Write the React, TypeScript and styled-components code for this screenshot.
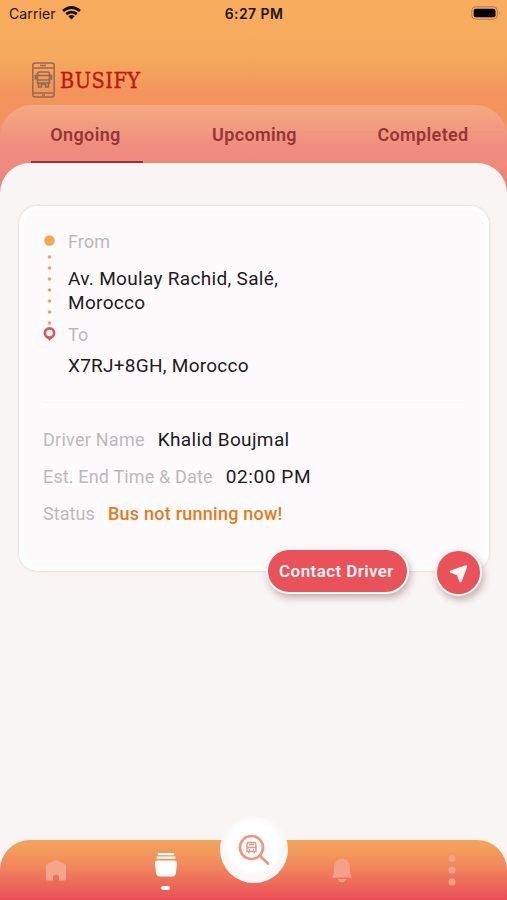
import React from "react";
import styled, { createGlobalStyle } from "styled-components";

const Global = createGlobalStyle`
  * { box-sizing: border-box; }
  body { margin: 0; background: #f9f5f4; font-family: Roboto, "Liberation Sans", sans-serif; }
  svg { display: block; flex: none; }
`;

const Screen = styled.div`
  position: relative;
  display: flex;
  flex-direction: column;
  width: 507px;
  height: 900px;
  overflow: hidden;
  background: #f9f5f4;
`;

const Header = styled.header`
  height: 192px;
  flex: none;
  background: linear-gradient(#f7ac5e 0, #f6aa5d 58px, #f2945b 92px, #f0935a 192px);
`;

const StatusBar = styled.div`
  display: grid;
  grid-template-columns: 1fr 1fr 1fr;
  align-items: center;
  height: 28px;
  padding: 0 6px 2px 9px;
  font-family: Inter, sans-serif;
  font-size: 14px;
  color: #1b130b;
`;

const Carrier = styled.div`
  display: flex;
  align-items: center;
  gap: 6px;
  letter-spacing: 0.1px;
`;

const Clock = styled.div`
  padding-right: 2px;
  text-align: center;
  font-weight: 600;
  letter-spacing: 0.4px;
`;

const Battery = styled.div`
  justify-self: end;
`;

const Brand = styled.div`
  display: flex;
  align-items: center;
  gap: 5px;
  height: 77px;
  padding: 27px 0 0 32px;
  font-family: "DejaVu Serif Condensed", "DejaVu Serif", serif;
  font-stretch: condensed;
  font-size: 21.5px;
  line-height: 50px;
  letter-spacing: 0.5px;
  color: #bd1710;
  -webkit-text-stroke: 0.35px #bd1710;
`;

const BrandName = styled.span`
  padding-top: 2px;
`;

const TabBar = styled.nav`
  display: flex;
  justify-content: space-between;
  height: 87px;
  padding: 0 28px 0 31px;
  border-radius: 32px 32px 0 0;
  background: linear-gradient(#f5aa80 0, #f08e7e 40px, #ef8b7d 58px, #ee7b78 100%);
`;

const Tab = styled.div<{ $active?: boolean; $spacing: number; $shift?: number }>`
  width: 112px;
  height: 58px;
  padding-right: ${(p) => p.$shift ?? 0}px;
  border-bottom: 2px solid ${(p) => (p.$active ? "#96303a" : "transparent")};
  text-align: center;
  font-size: 18px;
  font-weight: 600;
  line-height: 59px;
  letter-spacing: ${(p) => p.$spacing}px;
  white-space: nowrap;
  color: #963536;
`;

const Content = styled.main`
  position: relative;
  flex: 1;
  margin-top: -29px;
  padding: 43px 18px 0 19px;
  border-radius: 30px 30px 0 0;
  background: #f9f5f4;
`;

const Card = styled.section`
  position: relative;
  height: 365px;
  padding: 24px 25px 0 24px;
  border-radius: 19px;
  background: #fcfafb;
  box-shadow: inset 0 0 5px 4px #ffffff, 0 0 2px 1px rgba(85, 65, 65, 0.1);
`;

const Route = styled.div`
  display: grid;
  grid-template-columns: 14px 1fr;
  column-gap: 11px;
  height: 173px;
  border-bottom: 1px solid #f7f5f6;
`;

const Label = styled.div<{ $spacing?: number }>`
  font-size: 18px;
  line-height: 24px;
  letter-spacing: ${(p) => p.$spacing ?? 0.1}px;
  white-space: nowrap;
  color: #bcb9ba;
`;

const Address = styled.div<{ $top: number; $bottom?: number; $spacing: number }>`
  padding: ${(p) => p.$top}px 0 ${(p) => p.$bottom ?? 0}px;
  width: 245px;
  font-size: 19px;
  line-height: 24px;
  letter-spacing: ${(p) => p.$spacing}px;
  color: #211b1e;
`;

const Details = styled.div`
  display: flex;
  flex-direction: column;
  gap: 13px;
  padding-top: 25px;
`;

const Detail = styled.div`
  display: flex;
  align-items: baseline;
  gap: 13px;
  height: 24px;
`;

const Value = styled.div<{ $warning?: boolean; $spacing: number }>`
  font-size: ${(p) => (p.$warning ? 18 : 19)}px;
  font-weight: ${(p) => (p.$warning ? 500 : 400)};
  line-height: 24px;
  letter-spacing: ${(p) => p.$spacing}px;
  white-space: nowrap;
  color: ${(p) => (p.$warning ? "#e57b1b" : "#211b1e")};
`;

const Actions = styled.div`
  position: absolute;
  right: 7px;
  bottom: -25px;
  display: flex;
  align-items: center;
  gap: 26px;
`;

const ActionButton = styled.button<{ $round?: boolean }>`
  display: flex;
  align-items: center;
  justify-content: center;
  width: ${(p) => (p.$round ? 47 : 143)}px;
  height: ${(p) => (p.$round ? 47 : 46)}px;
  margin-top: ${(p) => (p.$round ? 4 : 0)}px;
  padding: 0 2px 0 0;
  border: 2px solid #fff6f5;
  border-radius: 24px;
  background: #e95258;
  box-shadow: 2px 4px 7px rgba(65, 30, 30, 0.3);
  font: 600 17px Roboto, sans-serif;
  letter-spacing: 0.4px;
  color: #fff5f5;
`;

const BottomNav = styled.nav`
  position: relative;
  display: grid;
  grid-template-columns: 110px 110px 66px 110px 110px;
  justify-content: center;
  flex: none;
  height: 60px;
  border-radius: 30px 30px 0 0;
  background: linear-gradient(#f5a65a 0, #f0875c 27px, #e95058 59px);
`;

const NavItem = styled.div`
  display: flex;
  flex-direction: column;
  align-items: center;
`;

const ActiveMark = styled.div`
  width: 9px;
  height: 4px;
  margin-top: 8px;
  border-radius: 2px;
  background: #fff;
`;

const SearchButton = styled.div`
  position: absolute;
  left: 220px;
  top: -24px;
  display: grid;
  place-items: center;
  width: 68px;
  height: 67px;
  border-radius: 50%;
  background: radial-gradient(circle at 50% 45%, #ffffff 24px, #faf7f8 30px);
`;

const BusBadge = () => (
  <g fill="none" stroke="currentColor" strokeWidth="1.7">
    <path d="M3 3Q3 1 5 1h8q2 0 2 2v9H3zM3 4.5H1V8h2m12-3.5h2V8h-2M3 4.5h12M3 9h12M4 12v4h3v-3h4v3h3v-4" />
  </g>
);

const SearchBus = () => (
  <g fill="none" stroke="currentColor" strokeWidth="1.4">
    <path d="M1 3Q1 1 3 1h5q2 0 2 2v7H1zM1 6h9M3 3h5" />
    <path d="M2.7 10v2M8.3 10v2M3 8.2h1M7 8.2h1" />
  </g>
);

export default function App() {
  return (
    <>
      <Global />
      <Screen>
        <Header>
          <StatusBar>
            <Carrier>
              Carrier
              <svg width="19" height="14" viewBox="0 0 19 14">
                <path d="M1 5Q9.5-2 18 5M4.2 8.2Q9.5 4 14.8 8.2" fill="none" stroke="#15100b" strokeWidth="2.8" />
                <path d="M6.3 10.3Q9.5 7.8 12.7 10.3L9.5 13.5z" fill="#15100b" />
              </svg>
            </Carrier>
            <Clock>6:27 PM</Clock>
            <Battery>
              <svg width="30" height="14" viewBox="0 0 30 14">
                <rect x=".8" y=".8" width="25.5" height="12.4" rx="3.8" fill="none" stroke="#a88050" />
                <rect x="2.7" y="2.7" width="21.8" height="8.6" rx="2" fill="#050402" />
                <path d="M28 5q1.5 2 0 4z" fill="#a88050" />
              </svg>
            </Battery>
          </StatusBar>
          <Brand>
            <svg width="23" height="36" viewBox="0 0 23 36" color="#936b55">
              <g fill="none" stroke="#936b55" strokeWidth="1.5">
                <rect x=".8" y="1" width="21.4" height="34" rx="2.5" />
                <path d="M1 6h21M1 31h21M8 3.5h6M10 33h3" />
              </g>
              <g transform="translate(2.5 9)"><BusBadge /></g>
            </svg>
            <BrandName>BUSIFY</BrandName>
          </Brand>
          <TabBar>
            <Tab $active $spacing={0.35} $shift={3}>Ongoing</Tab>
            <Tab $spacing={0.35} $shift={1}>Upcoming</Tab>
            <Tab $spacing={0.35}>Completed</Tab>
          </TabBar>
        </Header>
        <Content>
          <Card>
            <Route>
              <svg width="14" height="120" viewBox="0 0 14 120">
                <circle cx="6.5" cy="10.5" r="5.2" fill="#f4a650" />
                <path d="M6.5 27V95" stroke="#f4a650" strokeWidth="3.6" strokeLinecap="round" strokeDasharray="0 11" />
                <path d="M3.2 106.8L6.5 111l3.3-4.2z" fill="#df5260" />
                <circle cx="6.5" cy="103" r="4.6" fill="#fff" stroke="#df5260" strokeWidth="2.7" />
              </svg>
              <div>
                <Label>From</Label>
                <Address $top={13} $bottom={8} $spacing={0.32}>Av. Moulay Rachid, Salé,<br />Morocco</Address>
                <Label>To</Label>
                <Address $top={7} $spacing={0.26}>X7RJ+8GH, Morocco</Address>
              </div>
            </Route>
            <Details>
              <Detail><Label $spacing={0.25}>Driver Name</Label><Value $spacing={0.37}>Khalid Boujmal</Value></Detail>
              <Detail><Label $spacing={0.15}>Est. End Time &amp; Date</Label><Value $spacing={0.6}>02:00 PM</Value></Detail>
              <Detail><Label $spacing={0.08}>Status</Label><Value $warning $spacing={0.24}>Bus not running now!</Value></Detail>
            </Details>
            <Actions>
              <ActionButton>Contact Driver</ActionButton>
              <ActionButton $round aria-label="Track bus">
                <svg width="20" height="20" viewBox="0 0 20 20">
                  <path d="M3 8.7L18 3.5 12.5 18 10 11.5z" fill="#fff5f5" stroke="#fff5f5" strokeWidth="2.4" strokeLinejoin="round" />
                </svg>
              </ActionButton>
            </Actions>
          </Card>
        </Content>
        <BottomNav>
          <NavItem>
            <svg width="24" height="48" viewBox="0 0 24 48">
              <path d="M4 23.5l6.5-3q1.5-.8 3 0l6.5 3q2 1 2 3v12q0 2-2 2h-5v-4q-3-4-6 0v4H4q-2 0-2-2v-12q0-2 2-3z" fill="#f5a58a" />
            </svg>
          </NavItem>
          <NavItem>
            <svg width="24" height="38" viewBox="0 0 24 38">
              <path d="M4.8 14.2h14.4M3.5 17.7h17" stroke="white" strokeWidth="2.2" strokeLinecap="round" />
              <path d="M4 20.5h16q3.2 0 3 3l-1 9q-.5 4-4 4H6q-3.5 0-4-4l-1-9q-.2-3 3-3z" fill="#fff" />
            </svg>
            <ActiveMark />
          </NavItem>
          <NavItem />
          <NavItem>
            <svg width="24" height="48" viewBox="0 0 24 48">
              <path d="M12 18.5Q20 19 20 29Q20 35 22 37.5H2Q4 35 4 29Q4 19 12 18.5zM7.5 39h9q-4.5 7-9 0z" fill="#f5a087" />
            </svg>
          </NavItem>
          <NavItem>
            <svg width="12" height="48" viewBox="0 0 12 48" fill="#f5a087">
              <circle cx="6" cy="18.5" r="3.3" /><circle cx="6" cy="30" r="3.5" /><circle cx="6" cy="42" r="3.5" />
            </svg>
          </NavItem>
          <SearchButton>
            <svg width="34" height="34" viewBox="0 0 34 34" color="#f0957e">
              <circle cx="14.5" cy="14.5" r="11.5" fill="none" stroke="#f0957e" strokeWidth="2.7" />
              <path d="M23 23l8 7.5" stroke="#f0957e" strokeWidth="2.8" strokeLinecap="round" />
              <g transform="translate(9 8.5)"><SearchBus /></g>
            </svg>
          </SearchButton>
        </BottomNav>
      </Screen>
    </>
  );
}
